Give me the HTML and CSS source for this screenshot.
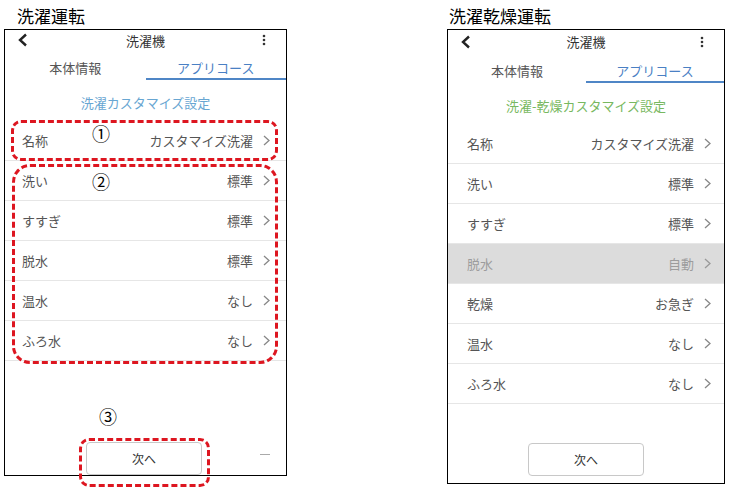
FILE: index.html
```html
<!DOCTYPE html>
<html lang="ja">
<head>
  <meta charset="UTF-8">
  <meta name="viewport" content="width=device-width, initial-scale=1.0">
  <title>洗濯運転 / 洗濯乾燥運転</title>
  <link rel="stylesheet" href="styles.css">
</head>
<body>
<div class="sheet">

  <div class="panel panel-wash">
    <div class="caption">洗濯運転</div>
    <div class="phone phone-wash">
      <div class="topbar">
        <svg class="back" width="12" height="14" viewBox="0 0 12 14"><polyline points="9,1.5 3,7 9,12.5" fill="none" stroke="#222" stroke-width="2.4"/></svg>
        <span class="topbar-title">洗濯機</span>
        <svg class="menu" width="4" height="12" viewBox="0 0 4 12"><circle cx="2" cy="2" r="1.3" fill="#333"/><circle cx="2" cy="6" r="1.3" fill="#333"/><circle cx="2" cy="10" r="1.3" fill="#333"/></svg>
      </div>
      <div class="tabs">
        <div class="tab">本体情報</div>
        <div class="tab active">アプリコース</div>
      </div>
      <div class="heading blue">洗濯カスタマイズ設定</div>
      <ul class="rows">
        <li><span>名称</span><span class="val">カスタマイズ洗濯</span><svg class="chev" width="7" height="11" viewBox="0 0 7 11"><polyline points="1,1 6,5.5 1,10" fill="none" stroke="#888" stroke-width="1.3"/></svg></li>
        <li><span>洗い</span><span class="val">標準</span><svg class="chev" width="7" height="11" viewBox="0 0 7 11"><polyline points="1,1 6,5.5 1,10" fill="none" stroke="#888" stroke-width="1.3"/></svg></li>
        <li><span>すすぎ</span><span class="val">標準</span><svg class="chev" width="7" height="11" viewBox="0 0 7 11"><polyline points="1,1 6,5.5 1,10" fill="none" stroke="#888" stroke-width="1.3"/></svg></li>
        <li><span>脱水</span><span class="val">標準</span><svg class="chev" width="7" height="11" viewBox="0 0 7 11"><polyline points="1,1 6,5.5 1,10" fill="none" stroke="#888" stroke-width="1.3"/></svg></li>
        <li><span>温水</span><span class="val">なし</span><svg class="chev" width="7" height="11" viewBox="0 0 7 11"><polyline points="1,1 6,5.5 1,10" fill="none" stroke="#888" stroke-width="1.3"/></svg></li>
        <li><span>ふろ水</span><span class="val">なし</span><svg class="chev" width="7" height="11" viewBox="0 0 7 11"><polyline points="1,1 6,5.5 1,10" fill="none" stroke="#888" stroke-width="1.3"/></svg></li>
      </ul>
      <div class="footer">
        <button class="next">次へ</button>
      </div>
    </div>
  </div>

  <div class="panel panel-dry">
    <div class="caption">洗濯乾燥運転</div>
    <div class="phone phone-dry">
      <div class="topbar">
        <svg class="back" width="12" height="14" viewBox="0 0 12 14"><polyline points="9,1.5 3,7 9,12.5" fill="none" stroke="#222" stroke-width="2.4"/></svg>
        <span class="topbar-title">洗濯機</span>
        <svg class="menu" width="4" height="12" viewBox="0 0 4 12"><circle cx="2" cy="2" r="1.3" fill="#333"/><circle cx="2" cy="6" r="1.3" fill="#333"/><circle cx="2" cy="10" r="1.3" fill="#333"/></svg>
      </div>
      <div class="tabs">
        <div class="tab">本体情報</div>
        <div class="tab active">アプリコース</div>
      </div>
      <div class="heading green">洗濯-乾燥カスタマイズ設定</div>
      <ul class="rows">
        <li><span>名称</span><span class="val">カスタマイズ洗濯</span><svg class="chev" width="7" height="11" viewBox="0 0 7 11"><polyline points="1,1 6,5.5 1,10" fill="none" stroke="#888" stroke-width="1.3"/></svg></li>
        <li><span>洗い</span><span class="val">標準</span><svg class="chev" width="7" height="11" viewBox="0 0 7 11"><polyline points="1,1 6,5.5 1,10" fill="none" stroke="#888" stroke-width="1.3"/></svg></li>
        <li><span>すすぎ</span><span class="val">標準</span><svg class="chev" width="7" height="11" viewBox="0 0 7 11"><polyline points="1,1 6,5.5 1,10" fill="none" stroke="#888" stroke-width="1.3"/></svg></li>
        <li class="disabled"><span>脱水</span><span class="val">自動</span><svg class="chev" width="7" height="11" viewBox="0 0 7 11"><polyline points="1,1 6,5.5 1,10" fill="none" stroke="#999" stroke-width="1.3"/></svg></li>
        <li><span>乾燥</span><span class="val">お急ぎ</span><svg class="chev" width="7" height="11" viewBox="0 0 7 11"><polyline points="1,1 6,5.5 1,10" fill="none" stroke="#888" stroke-width="1.3"/></svg></li>
        <li><span>温水</span><span class="val">なし</span><svg class="chev" width="7" height="11" viewBox="0 0 7 11"><polyline points="1,1 6,5.5 1,10" fill="none" stroke="#888" stroke-width="1.3"/></svg></li>
        <li><span>ふろ水</span><span class="val">なし</span><svg class="chev" width="7" height="11" viewBox="0 0 7 11"><polyline points="1,1 6,5.5 1,10" fill="none" stroke="#888" stroke-width="1.3"/></svg></li>
      </ul>
      <div class="footer">
        <button class="next">次へ</button>
      </div>
    </div>
  </div>

  <!-- annotations -->
  <div class="mark mark-1"></div>
  <div class="mark mark-2"></div>
  <div class="mark mark-3"></div>
  <span class="num num-1">①</span>
  <span class="num num-2">②</span>
  <span class="num num-3">③</span>
  <span class="stray"></span>
</div>
</body>
</html>
```

FILE: styles.css
```css
body {
  margin: 0;
  background: #fff;
  font-family: "Noto Sans CJK JP", "Noto Sans", sans-serif;
  color: #555;
}
.sheet {
  position: relative;
  display: flex;
  gap: 160px;
  padding-left: 4px;
  width: 730px;
  height: 489px;
  box-sizing: border-box;
  overflow: hidden;
}
.caption {
  height: 29px;
  font-size: 17px;
  line-height: 31px;
  color: #000;
}
.panel-wash .caption {
  padding-left: 13px;
}
.panel-dry .caption {
  padding-left: 2px;
}
.phone {
  border: 1px solid #000;
  box-sizing: border-box;
  display: flex;
  flex-direction: column;
  overflow: hidden;
  background: #fff;
}
.phone-wash {
  width: 283px;
  height: 447px;
}
.phone-dry {
  width: 278px;
  height: 455px;
}

/* top bar */
.topbar {
  height: 23px;
  display: flex;
  align-items: center;
  justify-content: space-between;
  padding: 0 20px 0 12px;
}
.topbar-title {
  font-size: 13px;
  color: #333;
}

/* tabs */
.tabs {
  display: flex;
  height: 30px;
}
.tab {
  flex: 1;
  text-align: center;
  font-size: 13px;
  line-height: 36px;
  color: #555;
}
.tab.active {
  color: #4a80c4;
  border-bottom: 2px solid #4f86c6;
  box-sizing: border-box;
}

.heading {
  height: 41px;
  line-height: 45px;
  text-align: center;
  font-size: 13px;
}
.heading.blue {
  color: #68a6d2;
}
.heading.green {
  color: #78b860;
}

/* setting rows */
.rows {
  list-style: none;
  margin: 0;
  padding: 0;
}
.rows li {
  height: 40px;
  box-sizing: border-box;
  border-bottom: 1px solid #e6e6e6;
  display: flex;
  align-items: center;
  font-size: 13px;
  color: #555;
}
.phone-wash .rows li {
  padding: 0 16px 0 17px;
}
.phone-dry .rows li {
  padding: 0 13px 0 19px;
}
.rows .val {
  margin-left: auto;
  margin-right: 10px;
}
.rows li.disabled {
  background: #dcdcdc;
  color: #9c9c9c;
}

/* next button */
.phone-wash .footer {
  margin-top: 81px;
}
.phone-dry .footer {
  margin-top: 39px;
}
.footer {
  display: flex;
  justify-content: center;
}
.next {
  width: 116px;
  height: 33px;
  background: #fff;
  border: 1px solid #c8c8c8;
  border-radius: 4px;
  font-family: "Noto Sans CJK JP", sans-serif;
  font-size: 12px;
  color: #333;
}
.phone-wash .next {
  margin-right: 3px;
}

/* red dashed annotation marks */
.mark {
  position: absolute;
  border: 3px dashed #dd1620;
  box-sizing: border-box;
}
.mark-1 {
  left: 11px;
  top: 120px;
  width: 267px;
  height: 41px;
  border-radius: 10px;
}
.mark-2 {
  left: 12px;
  top: 164px;
  width: 266px;
  height: 200px;
  border-radius: 18px;
}
.mark-3 {
  left: 79px;
  top: 438px;
  width: 131px;
  height: 49px;
  border-radius: 10px;
}
.num {
  position: absolute;
  font-family: "Noto Sans CJK JP", sans-serif;
  font-size: 18px;
  line-height: 18px;
  color: #000;
}
.num-1 {
  left: 92px;
  top: 124px;
}
.num-2 {
  left: 92px;
  top: 172px;
}
.num-3 {
  left: 99px;
  top: 407px;
}
.stray {
  position: absolute;
  left: 260px;
  top: 454px;
  width: 10px;
  height: 1px;
  background: #aaa;
}
```
